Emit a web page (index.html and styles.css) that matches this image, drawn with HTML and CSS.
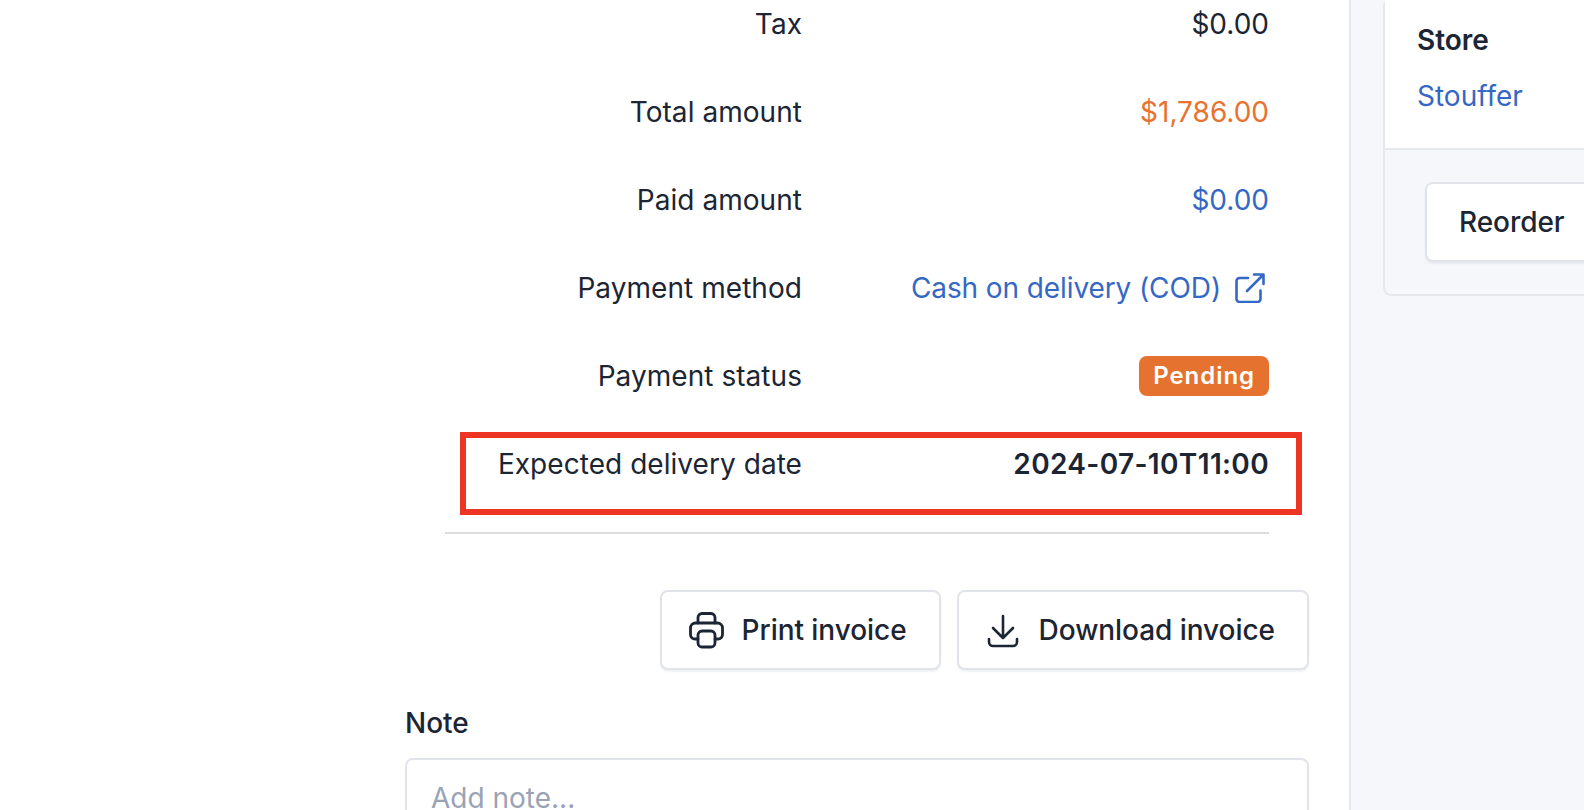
FILE: index.html
```html
<!DOCTYPE html>
<html lang="en">
<head>
    <meta charset="UTF-8">
    <meta name="viewport" content="width=device-width, initial-scale=1.0">
    <title>Order details</title>
    <link rel="stylesheet" href="styles.css">
</head>
<body>

<div class="page">
    <div class="main">
        <div class="summary">
            <div class="row"><span class="label">Tax</span><span class="value">$0.00</span></div>
            <div class="row"><span class="label">Total amount</span><span class="value orange">$1,786.00</span></div>
            <div class="row"><span class="label">Paid amount</span><span class="value blue">$0.00</span></div>
            <div class="row">
                <span class="label">Payment method</span>
                <span class="value blue method">
                    Cash on delivery (COD)
                    <svg class="icon-ext" viewBox="0 0 30 30" fill="none" stroke="currentColor" stroke-width="2.6" stroke-linecap="round" stroke-linejoin="round">
                        <path d="M13 5H4.5A3 3 0 0 0 1.5 8v18a3 3 0 0 0 3 3h18a3 3 0 0 0 3-3v-8.500"/>
                        <path d="M12 18 28 2M19 1.500h9.500V11"/>
                    </svg>
                </span>
            </div>
            <div class="row"><span class="label">Payment status</span><span class="value"><span class="badge">Pending</span></span></div>
            <div class="row"><span class="label">Expected delivery date</span><span class="value strong">2024-07-10T11:00</span></div>
        </div>
        <div class="divider"></div>

        <div class="actions">
            <button class="button">
                <svg class="icon" viewBox="0 0 40 40" fill="none" stroke="currentColor" stroke-width="2.800" stroke-linecap="round" stroke-linejoin="round">
                    <path d="M12 13V7.500a4 4 0 0 1 4-4h9a4 4 0 0 1 4 4V13"/>
                    <path d="M12 29H9a4.500 4.500 0 0 1-4.500-4.500V18a5 5 0 0 1 5-5h22a5 5 0 0 1 5 5v6.500A4.500 4.500 0 0 1 32 29h-3"/>
                    <rect x="12" y="21" width="17" height="16" rx="4"/>
                </svg>
                Print invoice
            </button>
            <button class="button">
                <svg class="icon" viewBox="0 0 40 40" fill="none" stroke="currentColor" stroke-width="2.600" stroke-linecap="round" stroke-linejoin="round">
                    <path d="M20 6v22M10 18l10 10 10-10"/>
                    <path d="M6 29v3a4 4 0 0 0 4 4h20a4 4 0 0 0 4-4v-3"/>
                </svg>
                Download invoice
            </button>
        </div>

        <div class="note-label">Note</div>
        <div class="note-box">Add note...</div>
    </div>

    <div class="aside">
        <div class="card">
            <div class="card-top">
                <div class="store-title">Store</div>
                <div class="store-link">Stouffer</div>
            </div>
            <div class="card-bottom">
                <button class="button reorder">Reorder</button>
            </div>
        </div>
    </div>
</div>

<!-- Red annotation box from the screenshot -->
<div class="highlight"></div>

</body>
</html>
```

FILE: styles.css
```css
/* Order page, zoomed screenshot */
html, body {
    height: 100%;
}
body {
    margin: 0;
    overflow: hidden;
    font-family: Inter, "Noto Sans", sans-serif;
    font-size: 28px;
    line-height: 40px;
    color: #1c2533;
    background-color: #fff;
}
.page {
    display: flex;
    height: 810px;
    overflow: hidden;
}
.main {
    width: 1351px;
    height: 810px;
    box-sizing: border-box;
    flex-shrink: 0;
    overflow: hidden;
    padding: 4px 40px 0 405px;
    border-right: 2px solid #e6e8ee;
}
.summary {
    display: flex;
    flex-direction: column;
    gap: 48px;
    margin-left: 40px;
    width: 824px;
}
.row {
    display: grid;
    grid-template-columns: 357px 1fr;
    height: 40px;
}
.label {
    text-align: right;
    letter-spacing: 0.05px;
}
.value {
    text-align: right;
}
.orange {
    color: #e8722f;
}
.blue {
    color: #3568c4;
}
.strong {
    font-weight: 600;
    letter-spacing: 0.35px;
}
.method {
    display: flex;
    align-items: center;
    justify-content: flex-end;
    gap: 14px;
    letter-spacing: -0.1px;
}
.icon-ext {
    width: 30px;
    height: 30px;
    margin-right: 4px;
}
.badge {
    display: inline-block;
    height: 40px;
    padding: 0 14px;
    border-radius: 8px;
    background-color: #e6722f;
    color: #fff;
    font-size: 24px;
    font-weight: 600;
    letter-spacing: 0.95px;
    vertical-align: top;
}
.divider {
    width: 824px;
    height: 2px;
    margin: 48px 0 56px 40px;
    background-color: #dcdcdc;
}
.actions {
    display: flex;
    justify-content: flex-end;
    gap: 16px;
}
.button {
    display: flex;
    align-items: center;
    gap: 16px;
    height: 80px;
    padding: 0 32px 0 24px;
    border: 2px solid #e0e3e9;
    border-radius: 8px;
    background-color: #fff;
    box-shadow: 0 2px 2px rgba(20, 30, 50, 0.06);
    color: #1c2533;
    font-family: inherit;
    font-size: 28px;
    font-weight: 500;
    letter-spacing: -0.05px;
}
.icon {
    width: 40px;
    height: 40px;
}
.note-label {
    margin-top: 33px;
    font-weight: 500;
}
.note-box {
    height: 120px;
    margin-top: 15px;
    padding: 18px 24px;
    border: 2px solid #e0e3e9;
    border-radius: 8px;
    color: #9aa3b5;
}
.aside {
    flex: 1;
    min-width: 0;
    padding-left: 32px;
    background-color: #f6f7fb;
}
.card {
    width: 400px;
    margin-top: -2px;
    border: 2px solid #e6e8ee;
    border-radius: 8px;
}
.card-top {
    padding: 20px 32px 32px;
    background-color: #fff;
    border-bottom: 2px solid #e6e8ee;
}
.store-title {
    font-weight: 600;
}
.store-link {
    margin-top: 16px;
    color: #3568c4;
}
.card-bottom {
    padding: 32px 40px;
}
.reorder {
    padding: 0 32px;
}
.highlight {
    position: absolute;
    left: 460px;
    top: 432px;
    width: 842px;
    height: 83px;
    box-sizing: border-box;
    border: 6px solid #ee3424;
}
```
